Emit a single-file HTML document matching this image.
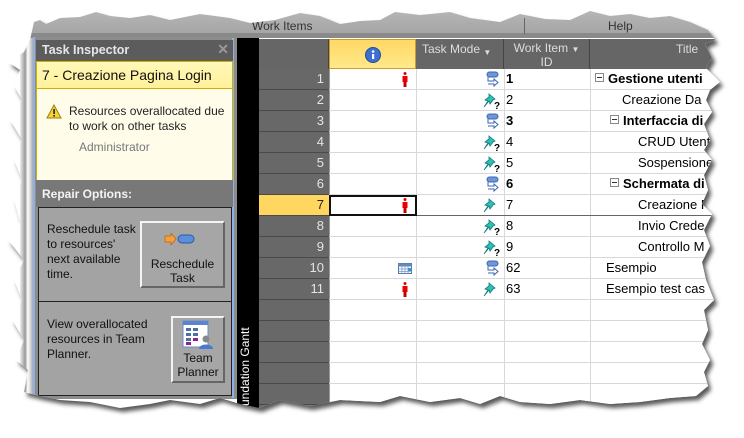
<!DOCTYPE html>
<html><head><meta charset="utf-8"><style>
*{margin:0;padding:0;box-sizing:border-box}
body{width:744px;height:438px;background:#fff;position:relative;overflow:hidden;font-family:"Liberation Sans",sans-serif}
.wrap{position:absolute;left:0;top:0;width:744px;height:438px;filter:drop-shadow(3px 4px 2px rgba(0,0,0,.65))}
.clip{position:absolute;left:0;top:0;width:744px;height:438px;background:#fff;
clip-path:polygon(30px 40px,34px 22px,40px 20px,46px 24px,60px 18px,80px 17px,96px 12px,110px 16px,130px 18px,150px 15px,170px 20px,200px 14px,230px 18px,250px 23px,275px 20px,300px 13px,320px 16px,340px 24px,360px 21px,380px 20px,395px 12px,420px 15px,450px 12px,470px 18px,500px 22px,520px 14px,545px 19px,570px 20px,590px 11px,610px 16px,630px 14px,650px 18px,670px 16px,690px 22px,708px 30px,715px 40px,705px 44px,712px 58px,706px 68px,720px 82px,710px 90px,706px 100px,712px 112px,704px 124px,710px 140px,704px 150px,712px 160px,704px 175px,708px 190px,702px 204px,712px 214px,704px 230px,710px 246px,702px 262px,706px 280px,714px 300px,704px 310px,708px 330px,702px 344px,710px 360px,704px 372px,708px 386px,696px 396px,670px 398px,640px 402px,610px 404px,580px 400px,550px 404px,520px 402px,500px 396px,480px 404px,460px 398px,430px 402px,400px 396px,380px 402px,340px 400px,310px 406px,280px 400px,259px 408px,240px 404px,220px 398px,200px 404px,170px 400px,150px 404px,120px 408px,90px 402px,60px 400px,40px 396px,24px 392px,28px 370px,16px 360px,24px 340px,12px 320px,22px 300px,14px 280px,24px 260px,8px 240px,20px 222px,14px 200px,22px 180px,14px 160px,22px 140px,10px 120px,22px 100px,14px 86px,20px 70px,8px 62px,24px 52px)}
.abs{position:absolute}
.rib{left:0;top:0;width:744px;height:35px;background:linear-gradient(#bdbdbd,#a4a4a4)}
.ribline{left:0;top:33px;width:744px;height:5px;background:#8a8a8a}
.chrome{left:20px;top:38px;width:13px;height:360px;background:linear-gradient(90deg,#eee,#999 40%,#fff 60%,#aaa)}
.panel{left:33px;top:37px;width:204px;height:362px;background:#8c8c8c;border-left:2px solid #8fb0e0}
.tt{left:36px;top:40px;width:197px;height:21px;background:#5c5c5c;color:#e6e6e6;font-weight:bold;font-size:12.5px;padding:3px 0 0 6px}
.yl{left:36px;top:61px;width:197px;height:28px;background:linear-gradient(#fff8b8,#fff09a);border:1px solid #cfb100;font-size:14px;padding:5px 0 0 5px;color:#111}
.cr{left:36px;top:89px;width:197px;height:91px;background:#fffdea;border-left:1px solid #cfb100;border-right:1px solid #cfb100;font-size:12px;color:#222}
.rh{left:36px;top:180px;width:197px;height:27px;background:#787878;color:#f4f4f4;font-weight:bold;font-size:12px;padding:7px 0 0 6px}
.box{left:38px;width:194px;background:#a3a3a3;border:1px solid #222;font-size:12px;color:#111;line-height:15px}
.btn{position:absolute;background:#a6a6a6;border:2px solid;border-color:#f4f4f4 #666 #666 #f4f4f4;text-align:center;font-size:12px;line-height:14px}
.black{left:237px;top:38px;width:22px;height:372px;background:#000}
.gv{left:259px;top:38px;width:460px;height:370px;background:#fff}
.rhd{left:259px;top:39px;width:70px;height:370px;background:#686868}
.hdr{top:39px;height:30px;background:#666;color:#ddd;font-size:12px;border-right:1px solid #444}
.row{position:absolute;left:259px;width:460px;height:21px;border-bottom:1px solid #d8d8d8}
.rn{position:absolute;left:0;width:70px;height:21px;background:#686868;border-bottom:1px solid #4a4a4a;color:#e4e4e4;font-size:13px;text-align:right;padding:2px 5px 0 0}
.vl{position:absolute;top:69px;width:1px;height:340px;background:#d8d8d8}
.t{position:absolute;top:2px;font-size:13px;color:#000;white-space:nowrap}
.b{font-weight:bold}
.mb{display:inline-block;width:9px;height:9px;border:1px solid #888;position:relative;top:-1px;margin-right:4px}
.mb:after{content:"";position:absolute;left:1px;top:3px;width:5px;height:1px;background:#333}
.per{position:absolute;left:143px;top:3px;width:6px;height:15px}
.ia{position:absolute;left:225px;top:2px;width:16px;height:17px}
.im{position:absolute;left:222px;top:2px;width:20px;height:18px}
</style></head><body>
<div class="wrap"><div class="clip">
<div class="abs rib"></div><div class="abs ribline"></div>
<div class="abs" style="left:252px;top:19px;font-size:12px;color:#333">Work Items</div>
<div class="abs" style="left:524px;top:18px;width:1px;height:16px;background:#666"></div>
<div class="abs" style="left:608px;top:19px;font-size:12px;color:#333">Help</div>
<div class="abs chrome"></div>
<div class="abs panel"></div>
<div class="abs" style="left:232px;top:38px;width:2px;height:360px;background:#8fb0e0"></div>
<div class="abs tt">Task Inspector<span style="position:absolute;right:4px;top:1px;color:#999;font-size:14px">✕</span></div>
<div class="abs yl">7 - Creazione Pagina Login</div>
<div class="abs cr">
 <svg class="abs" style="left:9px;top:15px" width="16" height="15"><path d="M8 1L15 14H1Z" fill="#f4d23a" stroke="#a08000"/><rect x="7.3" y="5" width="1.6" height="5" fill="#222"/><rect x="7.3" y="11" width="1.6" height="1.6" fill="#222"/></svg>
 <div class="abs" style="left:32px;top:15px;line-height:15px">Resources overallocated due<br>to work on other tasks</div>
 <div class="abs" style="left:42px;top:51px;color:#777">Administrator</div>
</div>
<div class="abs rh">Repair Options:</div>
<div class="abs box" style="top:207px;height:95px">
 <div class="abs" style="left:8px;top:14px">Reschedule task<br>to resources'<br>next available<br>time.</div>
 <div class="btn" style="left:101px;top:13px;width:85px;height:67px;padding-top:34px">Reschedule<br>Task
  <svg class="abs" style="left:22px;top:10px" width="34" height="12"><path d="M1 3h6V0l5 6-5 6V9H1z" fill="#f5a040" stroke="#c06000" stroke-width=".7"/><rect x="14" y="2" width="16" height="8" rx="4" fill="#5b8fdc" stroke="#2c5aa0"/></svg>
 </div>
</div>
<div class="abs box" style="top:301px;height:95px">
 <div class="abs" style="left:8px;top:15px">View overallocated<br>resources in Team<br>Planner.</div>
 <div class="btn" style="left:132px;top:14px;width:54px;height:67px;padding-top:33px">Team<br>Planner
  <svg class="abs" style="left:9px;top:2px" width="32" height="30"><rect x="1" y="1" width="25" height="26" fill="#fff" stroke="#6a8cc0"/><rect x="1" y="1" width="25" height="4" fill="#5a84d0"/><g fill="#4e6eaa"><rect x="4" y="8" width="5" height="3"/><rect x="11" y="8" width="5" height="3"/><rect x="4" y="13" width="5" height="3"/><rect x="11" y="13" width="5" height="3"/><rect x="4" y="18" width="5" height="3"/></g><g fill="#9020a0"><rect x="4" y="22" width="5" height="3"/><rect x="11" y="18" width="5" height="3"/></g><circle cx="24" cy="19" r="3.5" fill="#888"/><path d="M17 29c0-6 14-6 14 0z" fill="#4a7ad0"/></svg>
 </div>
</div>
<div class="abs black"></div>
<div class="abs" style="left:238px;top:406px;transform:rotate(-90deg);transform-origin:0 0;color:#fff;font-size:12px;white-space:nowrap">undation Gantt</div>
<div class="abs gv"></div>
<div class="abs rhd"></div>
<div class="abs hdr" style="left:259px;width:70px"></div>
<div class="abs hdr" style="left:329px;width:87px;background:linear-gradient(#ffd866,#ffe98a);border:1px solid #d09a30"><svg class="abs" style="left:35px;top:7px" width="16" height="16"><circle cx="8" cy="8" r="7.5" fill="#3d6fd0" stroke="#244a9a"/><rect x="7" y="7" width="2.2" height="5" fill="#fff"/><circle cx="8.1" cy="4.5" r="1.3" fill="#fff"/></svg></div>
<div class="abs hdr" style="left:416px;width:88px;padding:3px 0 0 6px">Task Mode <span style="font-size:8px;position:relative;top:2px">▼</span></div>
<div class="abs hdr" style="left:504px;width:86px;text-align:center;padding-top:3px;line-height:13px">Work Item <span style="font-size:8px">▼</span><br>ID</div>
<div class="abs hdr" style="left:590px;width:140px;padding:3px 0 0 86px">Title</div>
<div class="vl" style="left:329px;background:#999"></div><div class="vl" style="left:416px"></div><div class="vl" style="left:504px"></div><div class="vl" style="left:590px"></div>
<svg width="0" height="0" style="position:absolute"><defs>
<g id="p"><circle cx="3" cy="1.5" r="1.5" fill="#d00"/><rect x="0.5" y="4" width="5" height="6" fill="#e00"/><rect x="1.5" y="9" width="3" height="6" fill="#c00"/></g>
<g id="a"><rect x="3" y="1" width="11" height="5" rx="2.5" fill="#6f97d8" stroke="#3a64b0"/><path d="M4 6v4h6V8l4 3.5L10 15v-2H4" fill="#fff" stroke="#3a64b0"/></g>
<g id="m"><path d="M8 2l6 5-2 1-3 4-1-3-5 6 4-6-3-1 4-3z" fill="#2ec0b8" stroke="#127a78" stroke-width=".8"/></g>
<g id="mq"><use href="#m"/><text x="13" y="17" font-size="10" font-weight="bold" font-family="Liberation Sans">?</text></g>
</defs></svg>
<div class="abs" style="left:0;top:69px;width:744px">
 <div class="row" style="top:0"><div class="rn">1</div><svg class="per"><use href="#p"/></svg><svg class="ia"><use href="#a"/></svg><div class="t b" style="left:247px">1</div><div class="t b" style="left:336px"><span class="mb"></span>Gestione utenti</div></div>
 <div class="row" style="top:21px"><div class="rn">2</div><svg class="im"><use href="#mq"/></svg><div class="t" style="left:247px">2</div><div class="t" style="left:363px">Creazione Da</div></div>
 <div class="row" style="top:42px"><div class="rn">3</div><svg class="ia"><use href="#a"/></svg><div class="t b" style="left:247px">3</div><div class="t b" style="left:351px"><span class="mb"></span>Interfaccia di</div></div>
 <div class="row" style="top:63px"><div class="rn">4</div><svg class="im"><use href="#mq"/></svg><div class="t" style="left:247px">4</div><div class="t" style="left:379px">CRUD Utenti</div></div>
 <div class="row" style="top:84px"><div class="rn">5</div><svg class="im"><use href="#mq"/></svg><div class="t" style="left:247px">5</div><div class="t" style="left:379px">Sospensione</div></div>
 <div class="row" style="top:105px"><div class="rn">6</div><svg class="ia"><use href="#a"/></svg><div class="t b" style="left:247px">6</div><div class="t b" style="left:351px"><span class="mb"></span>Schermata di</div></div>
 <div class="row" style="top:126px;border-bottom:1px solid #666"><div class="rn" style="background:#ffd660;color:#222">7</div><div class="abs" style="left:70px;top:0;width:88px;height:21px;border:2px solid #111"></div><svg class="per"><use href="#p"/></svg><svg class="im"><use href="#m"/></svg><div class="t" style="left:247px">7</div><div class="t" style="left:379px">Creazione P</div></div>
 <div class="row" style="top:147px"><div class="rn">8</div><svg class="im"><use href="#mq"/></svg><div class="t" style="left:247px">8</div><div class="t" style="left:379px">Invio Crede</div></div>
 <div class="row" style="top:168px"><div class="rn">9</div><svg class="im"><use href="#mq"/></svg><div class="t" style="left:247px">9</div><div class="t" style="left:379px">Controllo M</div></div>
 <div class="row" style="top:189px"><div class="rn">10</div><svg class="abs" style="left:139px;top:5px" width="15" height="11"><rect x=".5" y=".5" width="13" height="10" fill="#fff" stroke="#5577aa"/><rect x=".5" y=".5" width="13" height="3" fill="#6688bb"/><path d="M1 6h13M1 8.5h13M4 3v8M7 3v8M10 3v8" stroke="#7799cc" stroke-width=".8"/><rect x="10" y="5" width="3" height="3" fill="#2a9ad0"/></svg><svg class="ia"><use href="#a"/></svg><div class="t" style="left:247px">62</div><div class="t" style="left:347px">Esempio</div></div>
 <div class="row" style="top:210px"><div class="rn">11</div><svg class="per"><use href="#p"/></svg><svg class="im"><use href="#m"/></svg><div class="t" style="left:247px">63</div><div class="t" style="left:347px">Esempio test cas</div></div>
 <div class="row" style="top:231px"><div class="rn"></div></div>
 <div class="row" style="top:252px"><div class="rn"></div></div>
 <div class="row" style="top:273px"><div class="rn"></div></div>
 <div class="row" style="top:294px"><div class="rn"></div></div>
 <div class="row" style="top:315px"><div class="rn"></div></div>
</div>
</div></div>
</body></html>
